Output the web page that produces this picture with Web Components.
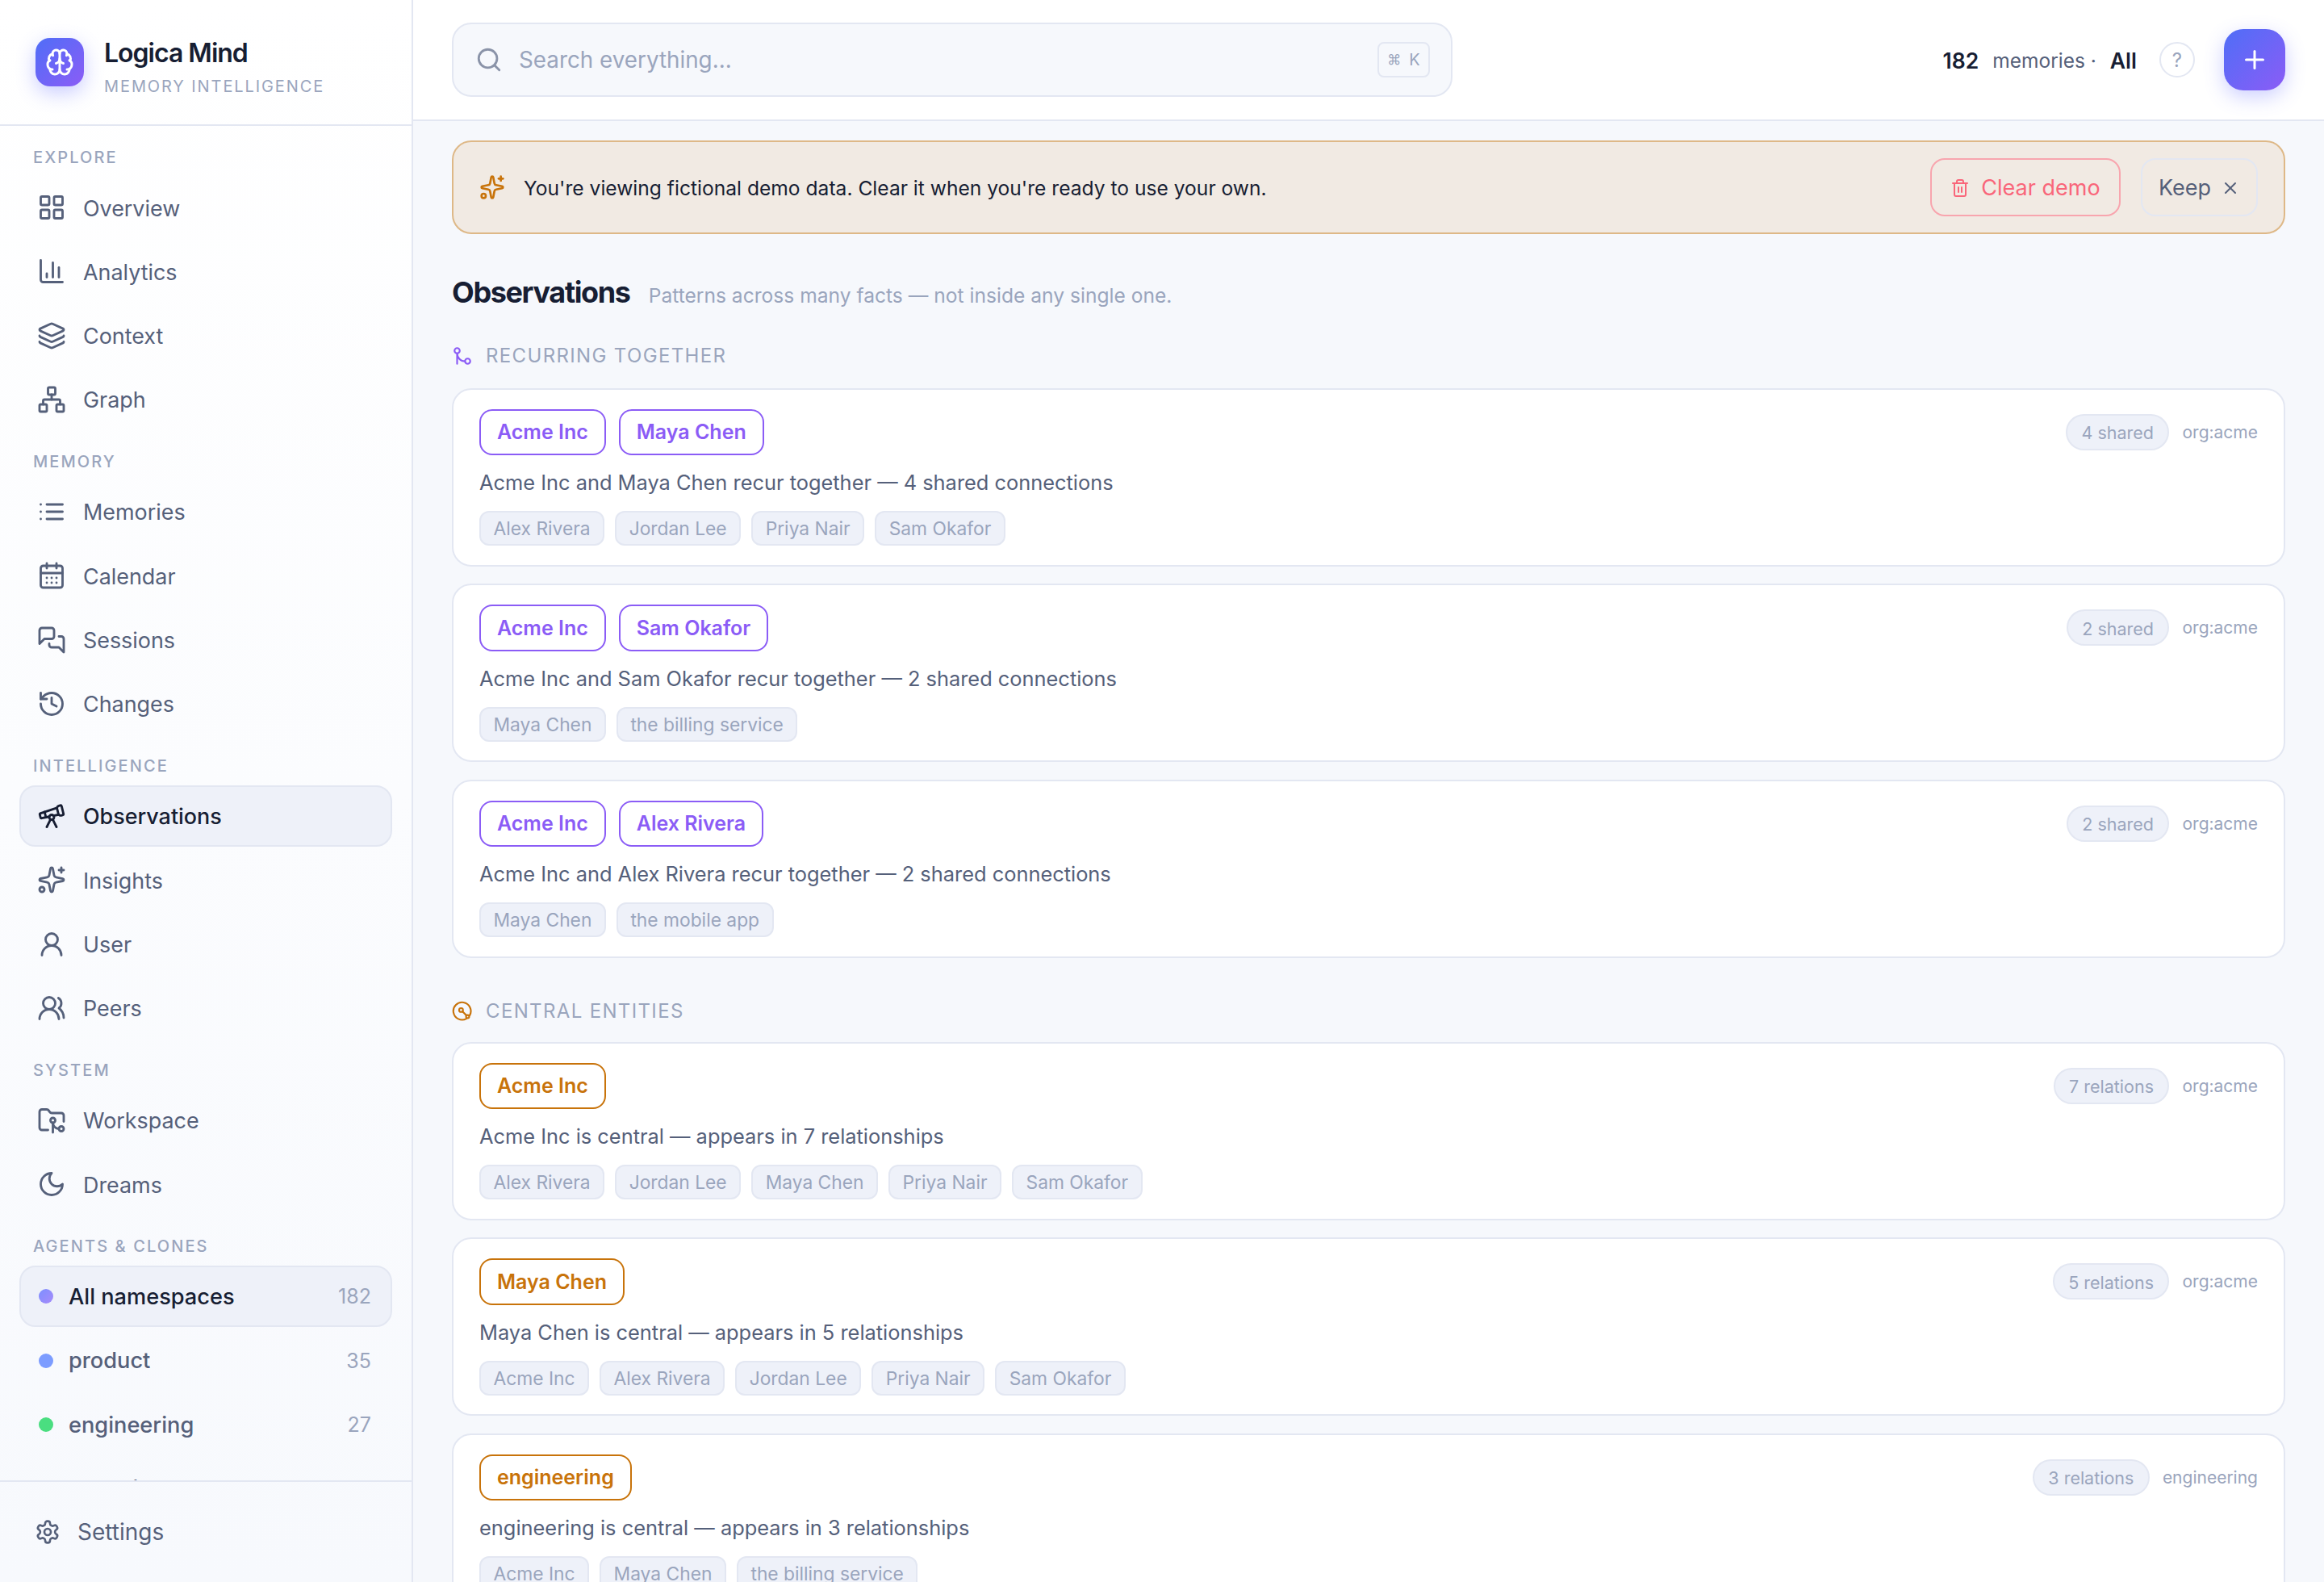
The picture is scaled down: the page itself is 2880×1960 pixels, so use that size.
<!DOCTYPE html>
<html lang="en">
<head>
<meta charset="utf-8">
<title>Logica Mind</title>
<style>
  html, body { margin: 0; height: 100%; }
  body { font-family: Inter, "Noto Sans", sans-serif; background: #f6f8fc; overflow: hidden; }
</style>
</head>
<body>
<lm-app>
  <lm-sidebar slot="side">
    <lm-nav-group label="EXPLORE">
      <lm-nav-item icon="grid">Overview</lm-nav-item>
      <lm-nav-item icon="chart">Analytics</lm-nav-item>
      <lm-nav-item icon="layers">Context</lm-nav-item>
      <lm-nav-item icon="network">Graph</lm-nav-item>
    </lm-nav-group>
    <lm-nav-group label="MEMORY">
      <lm-nav-item icon="list">Memories</lm-nav-item>
      <lm-nav-item icon="calendar">Calendar</lm-nav-item>
      <lm-nav-item icon="messages">Sessions</lm-nav-item>
      <lm-nav-item icon="history">Changes</lm-nav-item>
    </lm-nav-group>
    <lm-nav-group label="INTELLIGENCE">
      <lm-nav-item icon="telescope" active>Observations</lm-nav-item>
      <lm-nav-item icon="sparkles">Insights</lm-nav-item>
      <lm-nav-item icon="user">User</lm-nav-item>
      <lm-nav-item icon="users">Peers</lm-nav-item>
    </lm-nav-group>
    <lm-nav-group label="SYSTEM">
      <lm-nav-item icon="folder">Workspace</lm-nav-item>
      <lm-nav-item icon="moon">Dreams</lm-nav-item>
    </lm-nav-group>
    <lm-nav-group label="AGENTS &amp; CLONES">
      <lm-ns-item count="182" dot="linear-gradient(135deg,#7c8fff,#a78bfa)" active>All namespaces</lm-ns-item>
      <lm-ns-item count="35" dot="#7c9cff">product</lm-ns-item>
      <lm-ns-item count="27" dot="#4ade80">engineering</lm-ns-item>
      <lm-ns-item count="19" dot="#f5a524">analytics</lm-ns-item>
    </lm-nav-group>
  </lm-sidebar>

  <lm-topbar slot="top"></lm-topbar>

  <lm-banner>You're viewing fictional demo data. Clear it when you're ready to use your own.</lm-banner>

  <lm-page-title sub="Patterns across many facts — not inside any single one.">Observations</lm-page-title>

  <lm-section icon="merge" tone="#8b5cf6" label="RECURRING TOGETHER">
    <lm-card meta="4 shared" scope="org:acme">
      <lm-pill slot="pills" tone="#8b5cf6">Acme Inc</lm-pill>
      <lm-pill slot="pills" tone="#8b5cf6">Maya Chen</lm-pill>
      Acme Inc and Maya Chen recur together — 4 shared connections
      <lm-chip slot="chips">Alex Rivera</lm-chip>
      <lm-chip slot="chips">Jordan Lee</lm-chip>
      <lm-chip slot="chips">Priya Nair</lm-chip>
      <lm-chip slot="chips">Sam Okafor</lm-chip>
    </lm-card>
    <lm-card meta="2 shared" scope="org:acme">
      <lm-pill slot="pills" tone="#8b5cf6">Acme Inc</lm-pill>
      <lm-pill slot="pills" tone="#8b5cf6">Sam Okafor</lm-pill>
      Acme Inc and Sam Okafor recur together — 2 shared connections
      <lm-chip slot="chips">Maya Chen</lm-chip>
      <lm-chip slot="chips">the billing service</lm-chip>
    </lm-card>
    <lm-card meta="2 shared" scope="org:acme">
      <lm-pill slot="pills" tone="#8b5cf6">Acme Inc</lm-pill>
      <lm-pill slot="pills" tone="#8b5cf6">Alex Rivera</lm-pill>
      Acme Inc and Alex Rivera recur together — 2 shared connections
      <lm-chip slot="chips">Maya Chen</lm-chip>
      <lm-chip slot="chips">the mobile app</lm-chip>
    </lm-card>
  </lm-section>

  <lm-section icon="central" tone="#c8730a" label="CENTRAL ENTITIES" style="margin-top:51px;--head-gap:23px">
    <lm-card meta="7 relations" scope="org:acme">
      <lm-pill slot="pills" tone="#c8730a">Acme Inc</lm-pill>
      Acme Inc is central — appears in 7 relationships
      <lm-chip slot="chips">Alex Rivera</lm-chip>
      <lm-chip slot="chips">Jordan Lee</lm-chip>
      <lm-chip slot="chips">Maya Chen</lm-chip>
      <lm-chip slot="chips">Priya Nair</lm-chip>
      <lm-chip slot="chips">Sam Okafor</lm-chip>
    </lm-card>
    <lm-card meta="5 relations" scope="org:acme">
      <lm-pill slot="pills" tone="#c8730a">Maya Chen</lm-pill>
      Maya Chen is central — appears in 5 relationships
      <lm-chip slot="chips">Acme Inc</lm-chip>
      <lm-chip slot="chips">Alex Rivera</lm-chip>
      <lm-chip slot="chips">Jordan Lee</lm-chip>
      <lm-chip slot="chips">Priya Nair</lm-chip>
      <lm-chip slot="chips">Sam Okafor</lm-chip>
    </lm-card>
    <lm-card meta="3 relations" scope="engineering">
      <lm-pill slot="pills" tone="#c8730a">engineering</lm-pill>
      engineering is central — appears in 3 relationships
      <lm-chip slot="chips">Acme Inc</lm-chip>
      <lm-chip slot="chips">Maya Chen</lm-chip>
      <lm-chip slot="chips">the billing service</lm-chip>
    </lm-card>
  </lm-section>
</lm-app>

<script>
const ICONS = {
  grid: '<rect width="7" height="7" x="3" y="3" rx="1"/><rect width="7" height="7" x="14" y="3" rx="1"/><rect width="7" height="7" x="14" y="14" rx="1"/><rect width="7" height="7" x="3" y="14" rx="1"/>',
  chart: '<path d="M3 3v16a2 2 0 0 0 2 2h16"/><path d="M18 17V9"/><path d="M13 17V5"/><path d="M8 17v-3"/>',
  layers: '<path d="M12.83 2.18a2 2 0 0 0-1.66 0L2.6 6.08a1 1 0 0 0 0 1.83l8.58 3.91a2 2 0 0 0 1.66 0l8.58-3.9a1 1 0 0 0 0-1.83z"/><path d="M2 12a1 1 0 0 0 .58.91l8.6 3.91a2 2 0 0 0 1.65 0l8.58-3.9A1 1 0 0 0 22 12"/><path d="M2 17a1 1 0 0 0 .58.91l8.6 3.91a2 2 0 0 0 1.65 0l8.58-3.9A1 1 0 0 0 22 17"/>',
  network: '<rect x="16" y="16" width="6" height="6" rx="1"/><rect x="2" y="16" width="6" height="6" rx="1"/><rect x="9" y="2" width="6" height="6" rx="1"/><path d="M5 16v-3a1 1 0 0 1 1-1h12a1 1 0 0 1 1 1v3"/><path d="M12 12V8"/>',
  list: '<path d="M3 12h.01"/><path d="M3 18h.01"/><path d="M3 6h.01"/><path d="M8 12h13"/><path d="M8 18h13"/><path d="M8 6h13"/>',
  calendar: '<path d="M8 2v4"/><path d="M16 2v4"/><rect width="18" height="18" x="3" y="4" rx="2"/><path d="M3 10h18"/><path d="M8 14h.01"/><path d="M12 14h.01"/><path d="M16 14h.01"/><path d="M8 18h.01"/><path d="M12 18h.01"/><path d="M16 18h.01"/>',
  messages: '<path d="M14 9a2 2 0 0 1-2 2H6l-4 4V4a2 2 0 0 1 2-2h8a2 2 0 0 1 2 2z"/><path d="M18 9h2a2 2 0 0 1 2 2v11l-4-4h-6a2 2 0 0 1-2-2v-1"/>',
  history: '<path d="M3 12a9 9 0 1 0 9-9 9.75 9.75 0 0 0-6.74 2.74L3 8"/><path d="M3 3v5h5"/><path d="M12 7v5l4 2"/>',
  telescope: '<path d="m10.065 12.493-6.18 1.318a.934.934 0 0 1-1.108-.702l-.537-2.15a1.07 1.07 0 0 1 .691-1.265l13.504-4.44"/><path d="m13.56 11.747 4.332-.924"/><path d="m16 21-3.105-6.21"/><path d="M16.485 5.94a2 2 0 0 1 1.455-2.425l1.09-.272a1 1 0 0 1 1.212.727l1.515 6.06a1 1 0 0 1-.727 1.213l-1.09.272a2 2 0 0 1-2.425-1.455z"/><path d="m6.158 8.633 1.114 4.456"/><path d="m8 21 3.105-6.21"/><circle cx="12" cy="13" r="2"/>',
  sparkles: '<path d="M11.017 2.814a1 1 0 0 1 1.966 0l1.051 5.558a2 2 0 0 0 1.594 1.594l5.558 1.051a1 1 0 0 1 0 1.966l-5.558 1.051a2 2 0 0 0-1.594 1.594l-1.051 5.558a1 1 0 0 1-1.966 0l-1.051-5.558a2 2 0 0 0-1.594-1.594l-5.558-1.051a1 1 0 0 1 0-1.966l5.558-1.051a2 2 0 0 0 1.594-1.594z"/><path d="M20 2v4"/><path d="M22 4h-4"/><circle cx="4" cy="20" r="2"/>',
  user: '<circle cx="12" cy="8" r="5"/><path d="M20 21a8 8 0 0 0-16 0"/>',
  users: '<path d="M18 21a8 8 0 0 0-16 0"/><circle cx="10" cy="8" r="5"/><path d="M22 20c0-3.37-2-6.5-4-8a5 5 0 0 0-.45-8.3"/>',
  folder: '<path d="M9 20H4a2 2 0 0 1-2-2V5a2 2 0 0 1 2-2h3.9a2 2 0 0 1 1.69.9l.81 1.2a2 2 0 0 0 1.67.9H20a2 2 0 0 1 2 2v5"/><circle cx="13" cy="12" r="2"/><path d="M18 19c-2.8 0-5-2.2-5-5v8"/><circle cx="20" cy="19" r="2"/>',
  moon: '<path d="M12 3a6 6 0 0 0 9 9 9 9 0 1 1-9-9Z"/>',
  settings: '<path d="M12.22 2h-.44a2 2 0 0 0-2 2v.18a2 2 0 0 1-1 1.73l-.43.25a2 2 0 0 1-2 0l-.15-.08a2 2 0 0 0-2.73.73l-.22.38a2 2 0 0 0 .73 2.73l.15.1a2 2 0 0 1 1 1.72v.51a2 2 0 0 1-1 1.74l-.15.09a2 2 0 0 0-.73 2.73l.22.38a2 2 0 0 0 2.73.73l.15-.08a2 2 0 0 1 2 0l.43.25a2 2 0 0 1 1 1.73V20a2 2 0 0 0 2 2h.44a2 2 0 0 0 2-2v-.18a2 2 0 0 1 1-1.73l.43-.25a2 2 0 0 1 2 0l.15.08a2 2 0 0 0 2.73-.73l.22-.39a2 2 0 0 0-.73-2.73l-.15-.08a2 2 0 0 1-1-1.74v-.5a2 2 0 0 1 1-1.74l.15-.09a2 2 0 0 0 .73-2.73l-.22-.38a2 2 0 0 0-2.73-.73l-.15.08a2 2 0 0 1-2 0l-.43-.25a2 2 0 0 1-1-1.73V4a2 2 0 0 0-2-2z"/><circle cx="12" cy="12" r="3"/>',
  brain: '<path d="M12 18V5"/><path d="M15 13a4.17 4.17 0 0 1-3-4 4.17 4.17 0 0 1-3 4"/><path d="M17.598 6.5A3 3 0 1 0 12 5a3 3 0 1 0-5.598 1.5"/><path d="M17.997 5.125a4 4 0 0 1 2.526 5.77"/><path d="M18 18a4 4 0 0 0 2-7.464"/><path d="M19.967 17.483A4 4 0 1 1 12 18a4 4 0 1 1-7.967-.517"/><path d="M6 18a4 4 0 0 1-2-7.464"/><path d="M6.003 5.125a4 4 0 0 0-2.526 5.77"/>',
  search: '<circle cx="11" cy="11" r="8"/><path d="m21 21-4.3-4.3"/>',
  trash: '<path d="M3 6h18"/><path d="M19 6v14c0 1-1 2-2 2H7c-1 0-2-1-2-2V6"/><path d="M8 6V4c0-1 1-2 2-2h4c1 0 2 1 2 2v2"/><line x1="10" x2="10" y1="11" y2="17"/><line x1="14" x2="14" y1="11" y2="17"/>',
  x: '<path d="M18 6 6 18"/><path d="m6 6 12 12"/>',
  plus: '<path d="M5 12h14"/><path d="M12 5v14"/>',
  merge: '<circle cx="18" cy="18" r="3"/><circle cx="6" cy="6" r="3"/><path d="M6 21V9a9 9 0 0 0 9 9"/>',
  central: '<path d="M16.5 20.4A10 10 0 1 1 20.4 16.5"/><circle cx="10.5" cy="10.5" r="2.2"/><path d="m12.2 12.2 4.3 4.3"/><circle cx="18" cy="18" r="1.8"/>'
};

class LmIcon extends HTMLElement {
  connectedCallback() {
    if (this.shadowRoot) return;
    const size = this.getAttribute('size') || 36;
    const sw = this.getAttribute('stroke') || 2;
    this.attachShadow({mode: 'open'}).innerHTML = `
      <style>:host{display:inline-flex;flex:none;width:${size}px;height:${size}px;}svg{display:block;}</style>
      <svg width="${size}" height="${size}" viewBox="0 0 24 24" fill="none" stroke="currentColor" stroke-width="${sw}" stroke-linecap="round" stroke-linejoin="round">${ICONS[this.getAttribute('name')] || ''}</svg>`;
  }
}
customElements.define('lm-icon', LmIcon);

class LmApp extends HTMLElement {
  constructor() {
    super();
    this.attachShadow({mode: 'open'}).innerHTML = `
      <style>
        :host{display:grid;grid-template-columns:512px 1fr;width:2880px;height:1960px;overflow:hidden;}
        .right{display:flex;flex-direction:column;min-width:0;height:1960px;overflow:hidden;}
        main{padding:24px 48px 0;display:flex;flex-direction:column;}
      </style>
      <slot name="side"></slot>
      <div class="right">
        <slot name="top"></slot>
        <main><slot></slot></main>
      </div>`;
  }
}
customElements.define('lm-app', LmApp);

class LmSidebar extends HTMLElement {
  constructor() {
    super();
    this.attachShadow({mode: 'open'}).innerHTML = `
      <style>
        :host{display:flex;flex-direction:column;height:1960px;box-sizing:border-box;border-right:2px solid #e3e7f2;background:linear-gradient(180deg,#fff 0%,#f7f9fd 100%);}
        .brand{flex:none;height:156px;box-sizing:border-box;border-bottom:2px solid #e3e7f2;display:flex;align-items:center;gap:25px;padding:0 44px;}
        .logo{width:60px;height:60px;border-radius:18px;background:linear-gradient(135deg,#4f6ef7,#8b5cf6);box-shadow:0 8px 24px rgba(90,100,255,.32);display:flex;align-items:center;justify-content:center;color:#fff;}
        .text{padding-top:12px;}
        .name{font-size:32px;font-weight:600;letter-spacing:-1px;color:#171e33;line-height:40px;}
        .tag{font-size:20px;letter-spacing:1.9px;color:#9aa5bd;line-height:28px;margin-top:7px;}
        nav{flex:1;min-height:0;overflow:hidden;padding:26px 24px 0;display:flex;flex-direction:column;gap:26px;}
        footer{flex:none;height:126px;box-sizing:border-box;border-top:2px solid #e3e7f2;display:flex;align-items:center;gap:21px;padding:0 0 0 43px;color:#55607a;font-size:28px;}
      </style>
      <div class="brand">
        <div class="logo"><lm-icon name="brain" size="36" stroke="2"></lm-icon></div>
        <div class="text"><div class="name">Logica Mind</div><div class="tag">MEMORY INTELLIGENCE</div></div>
      </div>
      <nav><slot></slot></nav>
      <footer><lm-icon name="settings" size="32" stroke="2"></lm-icon><span>Settings</span></footer>`;
  }
}
customElements.define('lm-sidebar', LmSidebar);

class LmNavGroup extends HTMLElement {
  constructor() {
    super();
    this.attachShadow({mode: 'open'}).innerHTML = `
      <style>
        :host{display:block;}
        h4{margin:0 0 11px 17px;font-size:20px;font-weight:500;letter-spacing:2.1px;line-height:26px;color:#9aa5bd;}
        .items{display:flex;flex-direction:column;gap:3.33px;}
      </style>
      <h4></h4>
      <div class="items"><slot></slot></div>`;
  }
  connectedCallback() {
    this.shadowRoot.querySelector('h4').textContent = this.getAttribute('label');
  }
}
customElements.define('lm-nav-group', LmNavGroup);

class LmNavItem extends HTMLElement {
  connectedCallback() {
    if (this.shadowRoot) return;
    this.attachShadow({mode: 'open'}).innerHTML = `
      <style>
        :host{display:flex;align-items:center;gap:21px;height:76px;box-sizing:border-box;padding-left:20px;border:2px solid transparent;border-radius:20px;color:#55607a;font-size:26.9px;}
        :host([active]){background:#eef1f9;border-color:#e3e7f2;color:#171e33;font-weight:500;}
        span{padding-top:1px;}
      </style>
      <lm-icon name="${this.getAttribute('icon')}" size="36" stroke="1.9"></lm-icon>
      <span><slot></slot></span>`;
  }
}
customElements.define('lm-nav-item', LmNavItem);

class LmNsItem extends HTMLElement {
  connectedCallback() {
    if (this.shadowRoot) return;
    this.attachShadow({mode: 'open'}).innerHTML = `
      <style>
        :host{display:flex;align-items:center;height:76px;box-sizing:border-box;padding:0 24px 0 22px;border:2px solid transparent;border-radius:20px;color:#55607a;font-size:27.2px;font-weight:500;}
        :host([active]){background:#eef1f9;border-color:#e3e7f2;color:#171e33;}
        i{width:18px;height:18px;border-radius:50%;margin-right:19px;background:${this.getAttribute('dot')};}
        span{flex:1;padding-top:.5px;}
        b{font-weight:400;font-size:25px;color:#9aa5bd;}
      </style>
      <i></i><span><slot></slot></span><b>${this.getAttribute('count')}</b>`;
  }
}
customElements.define('lm-ns-item', LmNsItem);

class LmTopbar extends HTMLElement {
  constructor() {
    super();
    this.attachShadow({mode: 'open'}).innerHTML = `
      <style>
        :host{display:flex;align-items:center;flex:none;height:150px;box-sizing:border-box;padding:0 48px;background:#fff;border-bottom:2px solid #e3e7f2;}
        .search{width:1240px;height:92px;box-sizing:border-box;display:flex;align-items:center;background:#f6f8fc;border:2px solid #e3e7f2;border-radius:24px;padding:0 27px;color:#8a93a8;}
        .ph{flex:1;margin-left:20px;font-size:27.8px;color:#9aa5bd;}
        kbd{display:flex;align-items:center;justify-content:center;gap:10px;width:65px;height:44px;margin-right:-1px;box-sizing:border-box;border:2px solid #e3e7f2;border-radius:8px;font:20px Inter,"DejaVu Sans",sans-serif;color:#9aa5bd;}
        .stats{margin-left:auto;display:flex;align-items:center;font-size:24.5px;color:#55607a;padding-top:2px;}
        .stats b{font-weight:600;font-size:26.5px;color:#171e33;}
        .help{width:44px;height:44px;box-sizing:border-box;border:2px solid #e3e7f2;border-radius:50%;display:flex;align-items:center;justify-content:center;color:#9aa5bd;font-size:24px;margin:-2px 36px 0 28px;}
        .add{width:76px;height:76px;border-radius:24px;background:linear-gradient(135deg,#4f6ef7,#8b5cf6);box-shadow:0 8px 24px rgba(90,100,255,.3);display:flex;align-items:center;justify-content:center;color:#fff;}
      </style>
      <div class="search"><lm-icon name="search" size="34" stroke="2"></lm-icon><span class="ph">Search everything...</span><kbd><span style="font-size:17px">⌘</span><span>K</span></kbd></div>
      <div class="stats"><b>182</b><span style="margin:0 10px 0 17px">memories ·</span><b style="margin-left:7px">All</b><span class="help">?</span></div>
      <div class="add"><lm-icon name="plus" size="36" stroke="2"></lm-icon></div>`;
  }
}
customElements.define('lm-topbar', LmTopbar);

class LmBanner extends HTMLElement {
  constructor() {
    super();
    this.attachShadow({mode: 'open'}).innerHTML = `
      <style>
        :host{display:flex;align-items:center;height:116px;box-sizing:border-box;padding:0 32px;background:#f1eae3;border:2px solid #deb887;border-radius:24px;}
        .spark{color:#c8730a;}
        .msg{flex:1;margin-left:23px;padding-top:1.5px;font-size:24.6px;color:#171e33;}
        button{font:inherit;display:flex;align-items:center;height:72px;box-sizing:border-box;padding:1.5px 0 0;background:transparent;border-radius:18px;font-size:27px;}
        .clear{width:236px;justify-content:center;gap:14px;border:2px solid #f8a5ae;color:#f9667a;}
        .keep{width:145px;justify-content:center;gap:12px;margin-left:25px;border:2px solid #e3e7f2;color:#55607a;}
      </style>
      <lm-icon class="spark" name="sparkles" size="32" stroke="2"></lm-icon>
      <span class="msg"><slot></slot></span>
      <button class="clear"><lm-icon name="trash" size="24" stroke="2"></lm-icon>Clear demo</button>
      <button class="keep">Keep<lm-icon name="x" size="24" stroke="2"></lm-icon></button>`;
  }
}
customElements.define('lm-banner', LmBanner);

class LmPageTitle extends HTMLElement {
  connectedCallback() {
    if (this.shadowRoot) return;
    this.attachShadow({mode: 'open'}).innerHTML = `
      <style>
        :host{display:flex;align-items:baseline;gap:23px;margin:47.5px 0 36px;line-height:48px;}
        h1{margin:0;font-size:36px;font-weight:700;letter-spacing:-1.36px;color:#171e33;}
        span{font-size:24.6px;color:#9aa5bd;}
      </style>
      <h1><slot></slot></h1><span>${this.getAttribute('sub')}</span>`;
  }
}
customElements.define('lm-page-title', LmPageTitle);

class LmSection extends HTMLElement {
  connectedCallback() {
    if (this.shadowRoot) return;
    this.attachShadow({mode: 'open'}).innerHTML = `
      <style>
        :host{display:block;}
        .head{display:flex;align-items:center;gap:16px;height:30px;margin-bottom:var(--head-gap,25px);font-size:24px;letter-spacing:1.35px;color:#9aa5bd;}
        .head lm-icon{color:${this.getAttribute('tone')};}
        .cards{display:flex;flex-direction:column;gap:21.5px;}
      </style>
      <div class="head"><lm-icon name="${this.getAttribute('icon')}" size="26" stroke="2"></lm-icon><span>${this.getAttribute('label')}</span></div>
      <div class="cards"><slot></slot></div>`;
  }
}
customElements.define('lm-section', LmSection);

class LmCard extends HTMLElement {
  connectedCallback() {
    if (this.shadowRoot) return;
    this.attachShadow({mode: 'open'}).innerHTML = `
      <style>
        :host{display:block;box-sizing:border-box;height:221px;padding:24px 32px;background:#fff;border:2px solid #e3e7f2;border-radius:24px;}
        .top{display:flex;align-items:flex-start;justify-content:space-between;}
        .pills{display:flex;gap:16px;}
        .meta{display:flex;align-items:center;gap:16px;padding-top:6px;font-size:21px;color:#9aa5bd;}
        .count{height:45px;box-sizing:border-box;display:flex;align-items:center;padding:2px 17.5px 0;font-size:21.5px;background:#eef1f9;border:2px solid #e3e7f2;border-radius:23px;}
        .desc{margin:15px 0 16px;line-height:38px;font-size:25.4px;color:#55607a;}
        .chips{display:flex;gap:13px;}
      </style>
      <div class="top">
        <div class="pills"><slot name="pills"></slot></div>
        <div class="meta"><span class="count">${this.getAttribute('meta')}</span><span>${this.getAttribute('scope')}</span></div>
      </div>
      <div class="desc"><slot></slot></div>
      <div class="chips"><slot name="chips"></slot></div>`;
  }
}
customElements.define('lm-card', LmCard);

class LmPill extends HTMLElement {
  connectedCallback() {
    if (this.shadowRoot) return;
    const tone = this.getAttribute('tone');
    this.attachShadow({mode: 'open'}).innerHTML = `
      <style>
        :host{display:flex;align-items:center;height:57.5px;box-sizing:border-box;padding:0 20px;border:2px solid ${tone};border-radius:16px;color:${tone};font-size:25px;font-weight:600;}
      </style><slot></slot>`;
  }
}
customElements.define('lm-pill', LmPill);

class LmChip extends HTMLElement {
  constructor() {
    super();
    this.attachShadow({mode: 'open'}).innerHTML = `
      <style>
        :host{display:flex;align-items:center;height:43px;box-sizing:border-box;padding:0 15.5px;background:#eef1f9;border:2px solid #e3e7f2;border-radius:12px;color:#9aa5bd;font-size:22.8px;}
      </style><slot></slot>`;
  }
}
customElements.define('lm-chip', LmChip);
</script>
</body>
</html>
